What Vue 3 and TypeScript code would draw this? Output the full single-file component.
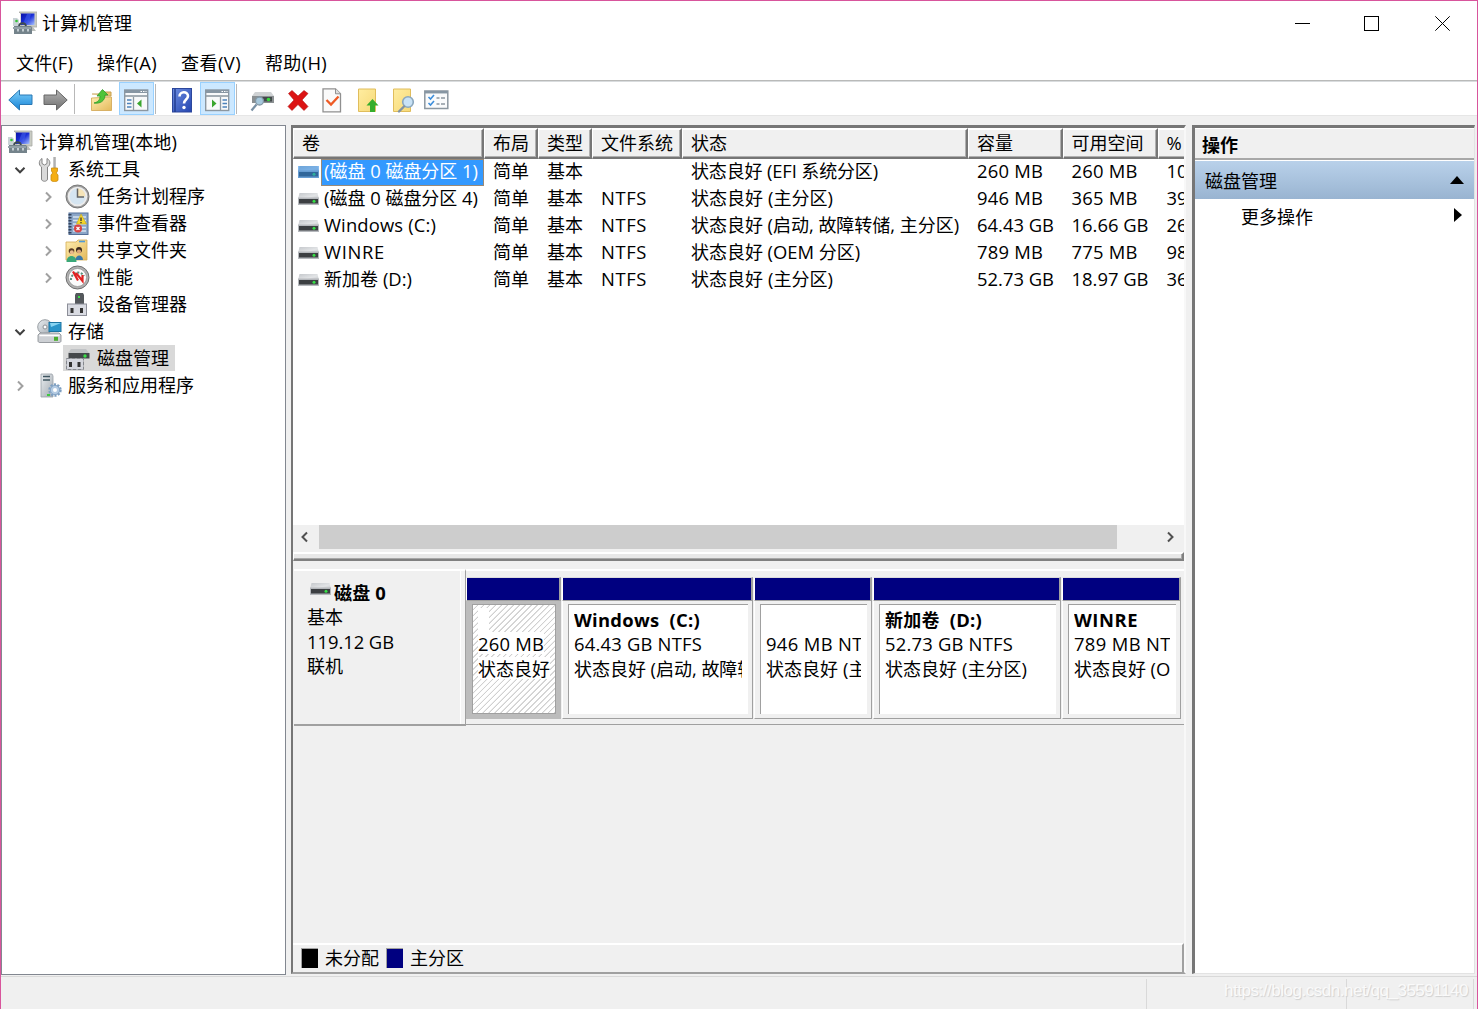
<script setup lang="ts">
import { h, type FunctionalComponent } from 'vue'

/* Splits a label into Latin and CJK runs so each script gets its own size. */
const Txt: FunctionalComponent<{ t: string }> = (props) =>
  h(
    'span',
    { class: 'txt' },
    (props.t.match(/[\u2e80-\u9fff]+|[^\u2e80-\u9fff]+/g) ?? []).map((run) =>
      h('span', { class: /[\u2e80-\u9fff]/.test(run) ? 'cjk' : 'lat' }, run),
    ),
  )
Txt.props = ['t']

/* Tunes letter spacing so that a label takes the given advance width. */
const vFit = {
  mounted(el: HTMLElement, binding: { value?: number }) {
    const target = binding.value
    const n = (el.textContent ?? '').length
    if (!target || !n) return
    const natural = el.getBoundingClientRect().width
    el.style.letterSpacing = `${(target - natural) / n}px`
  },
}

const menus = [
  { t: '文件(F)', w: 57 },
  { t: '操作(A)', w: 60 },
  { t: '查看(V)', w: 60 },
  { t: '帮助(H)', w: 62 },
]

interface Tool { icon: string; gap: number; on?: boolean }
const tools: Tool[] = [
  { icon: 'back', gap: 7 },
  { icon: 'fwd', gap: 11 },
  { icon: 'sep', gap: 7 },
  { icon: 'folder', gap: 15 },
  { icon: 'paneL', gap: 5, on: true },
  { icon: 'sep', gap: 1 },
  { icon: 'help', gap: 14 },
  { icon: 'paneR', gap: 6, on: true },
  { icon: 'sep', gap: 1 },
  { icon: 'scan', gap: 13 },
  { icon: 'del', gap: 12 },
  { icon: 'check', gap: 10 },
  { icon: 'up', gap: 12 },
  { icon: 'find', gap: 11 },
  { icon: 'list', gap: 9 },
]

interface Node { t: string; icon: string; lvl: number; arrow?: 'open' | 'closed'; sel?: boolean; w?: number }
const tree: Node[] = [
  { t: '计算机管理(本地)', icon: 'computer', lvl: 0, w: 138 },
  { t: '系统工具', icon: 'tools', lvl: 1, arrow: 'open' },
  { t: '任务计划程序', icon: 'clock', lvl: 2, arrow: 'closed' },
  { t: '事件查看器', icon: 'event', lvl: 2, arrow: 'closed' },
  { t: '共享文件夹', icon: 'share', lvl: 2, arrow: 'closed' },
  { t: '性能', icon: 'perf', lvl: 2, arrow: 'closed' },
  { t: '设备管理器', icon: 'device', lvl: 2 },
  { t: '存储', icon: 'storage', lvl: 1, arrow: 'open' },
  { t: '磁盘管理', icon: 'diskmgmt', lvl: 2, sel: true },
  { t: '服务和应用程序', icon: 'services', lvl: 1, arrow: 'closed' },
]

const columns = ['卷', '布局', '类型', '文件系统', '状态', '容量', '可用空间', '%']

interface Volume { name: string; nw: number; fs: string; st: string; sw: number; cap: string; cw: number; free: string; fw: number; pct: string; sel?: boolean }
const volumes: Volume[] = [
  { name: '(磁盘 0 磁盘分区 1)', nw: 154, fs: '', st: '状态良好 (EFI 系统分区)', sw: 187, cap: '260 MB', cw: 66, free: '260 MB', fw: 66, pct: '100 %', sel: true },
  { name: '(磁盘 0 磁盘分区 4)', nw: 154, fs: 'NTFS', st: '状态良好 (主分区)', sw: 142, cap: '946 MB', cw: 66, free: '365 MB', fw: 66, pct: '39 %' },
  { name: 'Windows (C:)', nw: 112, fs: 'NTFS', st: '状态良好 (启动, 故障转储, 主分区)', sw: 268, cap: '64.43 GB', cw: 77, free: '16.66 GB', fw: 77, pct: '26 %' },
  { name: 'WINRE', nw: 61, fs: 'NTFS', st: '状态良好 (OEM 分区)', sw: 169, cap: '789 MB', cw: 66, free: '775 MB', fw: 66, pct: '98 %' },
  { name: '新加卷 (D:)', nw: 88, fs: 'NTFS', st: '状态良好 (主分区)', sw: 142, cap: '52.73 GB', cw: 77, free: '18.97 GB', fw: 77, pct: '36 %' },
]

interface Part { width: number; name: string; nw?: number; size: string; sw: number; st: string; tw: number; sel?: boolean }
const parts: Part[] = [
  { width: 95, name: '', size: '260 MB', sw: 66, st: '状态良好', tw: 72, sel: true },
  { width: 191, name: 'Windows  (C:)', nw: 126, size: '64.43 GB NTFS', sw: 128, st: '状态良好 (启动, 故障转储, 主分区)', tw: 268 },
  { width: 118, name: '', size: '946 MB NTFS', sw: 117, st: '状态良好 (主分区)', tw: 142 },
  { width: 188, name: '新加卷  (D:)', nw: 97, size: '52.73 GB NTFS', sw: 128, st: '状态良好 (主分区)', tw: 142 },
  { width: 119, name: 'WINRE', nw: 64, size: '789 MB NTFS', sw: 117, st: '状态良好 (OEM 分区)', tw: 169 },
]
</script>

<template>
  <div class="window">
    <svg class="defs" width="0" height="0">
      <defs>
        <linearGradient id="gBlue" x1="0" y1="0" x2="0" y2="1"><stop offset="0" stop-color="#7fd0fa" /><stop offset="1" stop-color="#1683d6" /></linearGradient>
        <linearGradient id="gGrey" x1="0" y1="0" x2="0" y2="1"><stop offset="0" stop-color="#b4b4b4" /><stop offset="1" stop-color="#6e6e6e" /></linearGradient>
        <linearGradient id="gFold" x1="0" y1="0" x2="1" y2="1"><stop offset="0" stop-color="#ffeeb0" /><stop offset="1" stop-color="#e3b95c" /></linearGradient>
        <linearGradient id="gYel" x1="0" y1="0" x2="1" y2="1"><stop offset="0" stop-color="#ffedA0" /><stop offset="1" stop-color="#f6d978" /></linearGradient>
        <linearGradient id="gHelp" x1="0" y1="0" x2="1" y2="1"><stop offset="0" stop-color="#6d8de0" /><stop offset="1" stop-color="#2345b0" /></linearGradient>
        <linearGradient id="gScr" x1="0" y1="0" x2="1" y2="1"><stop offset="0" stop-color="#0a12a8" /><stop offset=".5" stop-color="#1b2fd8" /><stop offset="1" stop-color="#a9c4ff" /></linearGradient>
        <linearGradient id="gMetal" x1="0" y1="0" x2="1" y2="1"><stop offset="0" stop-color="#e8ecef" /><stop offset="1" stop-color="#a4abb2" /></linearGradient>
        <linearGradient id="gTop" x1="0" y1="0" x2="1" y2="1"><stop offset="0" stop-color="#c4c7cb" /><stop offset=".6" stop-color="#e2e4e6" /><stop offset="1" stop-color="#c4c7cb" /></linearGradient>
        <g id="computer">
          <path d="M6 1h18v15H8V3z" fill="#c9ccc4" stroke="#a8aaa4" stroke-width=".8" />
          <rect x="8" y="2.500" width="13.500" height="11.500" fill="url(#gScr)" />
          <path d="M14 3l4 0l-2 8l-6 2z" fill="#4c6cf0" opacity=".45" />
          <path d="M13 16h7l3 4H12z" fill="#b9bdb9" />
          <path d="M0 7h4l2 2v6H0z" fill="#c8d2d6" /><circle cx="3.500" cy="10" r="1.300" fill="#35c435" />
          <path d="M6 16c0-5 7-5 7 0" fill="none" stroke="#3e4a50" stroke-width="1.800" />
          <path d="M1 15h17l1 1.500v6.500H1z" fill="#74838b" /><path d="M0 16h18v2H0z" fill="#93a1a8" />
          <path d="M4 18h2v2.500H4zM9 18h2v2.500H9zM14 18h2v2.500h-2z" fill="#c3cdd2" />
        </g>
        <g id="drive">
          <path d="M1.500 0h18L21 6H0z" fill="url(#gTop)" /><rect x="0" y="4.500" width="21" height="7.500" fill="#b5b8bc" />
          <rect x="1" y="6" width="19" height="4.500" fill="#3c3f42" /><circle cx="16" cy="8.300" r="1.500" fill="#36e046" />
        </g>
        <g id="pane">
          <rect x=".7" y="1" width="23" height="20.500" fill="#f8f9fa" stroke="#8c97a0" stroke-width="1.400" />
          <rect x="1" y="1" width="22.500" height="3" fill="#8796a3" /><path d="M1 7h22" stroke="#8f9aa3" stroke-width="1.600" />
          <path d="M16.500 2.500h1.500M19 2.500h1.500M21.500 2.500h1" stroke="#fff" stroke-width="1.200" />
        </g>
        <g id="lens"><circle cx="15" cy="12" r="5.300" fill="#c8e2f6" stroke="#8aa7bd" stroke-width="1.600" /><path d="M11 16.500L6 21.500" stroke="#8293a2" stroke-width="2.400" stroke-linecap="round" /></g>
      </defs>
    </svg>

    <header class="title">
      <svg class="app-icon" viewBox="0 0 24 24"><use href="#computer" /></svg>
      <span class="caption">计算机管理</span>
      <div class="controls">
        <svg viewBox="0 0 15 15"><path d="M0 7.500h15" /></svg>
        <svg viewBox="0 0 15 15"><rect x=".5" y=".5" width="14" height="14" /></svg>
        <svg viewBox="0 0 15 15"><path d="M.3.3l14.400 14.400M14.700.3L.3 14.700" /></svg>
      </div>
    </header>

    <nav class="menu">
      <Txt v-for="m in menus" :key="m.t" v-fit="m.w" :t="m.t" />
    </nav>

    <div class="toolbar">
      <div v-for="(tool, i) in tools" :key="i" :class="['tool', { on: tool.on, sep: tool.icon === 'sep' }]" :style="{ marginLeft: tool.gap + 'px' }">
        <svg v-if="tool.icon !== 'sep'" viewBox="0 0 25 25">
          <path v-if="tool.icon === 'back'" d="M.8 12L11.500 2v5H24v9.500H11.500V22z" fill="url(#gBlue)" stroke="#2a78b4" />
          <path v-else-if="tool.icon === 'fwd'" d="M24.200 12L13.500 2v5H1v9.500h12.500V22z" fill="url(#gGrey)" stroke="#666" />
          <g v-else-if="tool.icon === 'folder'">
            <path d="M2 6h8l2 2h9V4h-7l-2 3" fill="#e9c672" stroke="#c7a050" /><path d="M1.500 10l20-1v13.500h-20z" fill="url(#gFold)" stroke="#d0a550" stroke-width=".8" />
            <path d="M4 15c4-1 6-3 6-7H7l5.500-6.500L18 7h-3c0 6-5 9-11 8z" fill="#50c43a" stroke="#2f9c28" stroke-width=".8" />
          </g>
          <g v-else-if="tool.icon === 'paneL'"><use href="#pane" /><path d="M9.500 8v13" stroke="#8f9aa3" stroke-width="1.300" /><path d="M3 11h4.500M3 14.500h4.500M3 18h4.500" stroke="#4c83bb" stroke-width="1.500" /><path d="M17.500 10.500v8l-4.500-4z" fill="#3aa62e" /></g>
          <g v-else-if="tool.icon === 'paneR'"><use href="#pane" /><path d="M15.500 8v13" stroke="#8f9aa3" stroke-width="1.300" /><path d="M17.500 11h4.500M17.500 14.500h4.500M17.500 18h4.500" stroke="#4c83bb" stroke-width="1.500" /><path d="M7 10.500v8l4.500-4z" fill="#3aa62e" /></g>
          <g v-else-if="tool.icon === 'help'">
            <rect x="2.500" y=".5" width="19" height="23.500" fill="url(#gHelp)" stroke="#2c479c" /><path d="M5 1v23" stroke="#1d3788" stroke-width="1.300" />
            <path d="M9.500 8.500c0-5.500 8.500-5.500 8.500-.5c0 3.500-4 3.500-4 7.500" fill="none" stroke="#fff" stroke-width="2.600" /><circle cx="14" cy="19.500" r="1.700" fill="#fff" />
          </g>
          <g v-else-if="tool.icon === 'scan'"><path d="M5 4h16l3 4H2z" fill="#cfd2d4" /><rect x="2" y="8" width="22" height="7" fill="#8b9092" /><rect x="10" y="9" width="12" height="4.500" fill="#43484b" /><circle cx="18.500" cy="11.500" r="1.800" fill="#38d83e" /><circle cx="9.500" cy="13" r="4" fill="#a6c8dc" stroke="#8296a4" stroke-width="1.300" /><path d="M6.500 16.500l-5 6" stroke="#7890a4" stroke-width="2.200" /></g>
          <path v-else-if="tool.icon === 'del'" d="M2.500 5.500L6 2.500l6 5.500l6-5.500l4 3l-6 6.500l6 6.500l-4 4l-6-6l-6 6l-4-4l6-6.500z" fill="#dc1414" stroke="#b00d0d" stroke-width=".6" />
          <g v-else-if="tool.icon === 'check'"><path d="M3 .8h12.500l5 5V23.800H3z" fill="#fafafa" stroke="#909090" stroke-width="1.300" /><path d="M15.500.8v5h5" fill="#ddd" stroke="#909090" /><path d="M6.500 12l4.500 4.500l7.500-8" fill="none" stroke="#ee5a24" stroke-width="2.300" /></g>
          <g v-else-if="tool.icon === 'up'"><path d="M2.500 1h17v22.500h-17z" fill="url(#gYel)" stroke="#e0bd5c" /><path d="M16.500 11l6 6.500h-3.500V24h-5v-6.500H10.500z" fill="#35ad2c" /></g>
          <g v-else-if="tool.icon === 'find'"><path d="M2.500 1h17v22.500h-17z" fill="url(#gYel)" stroke="#e0bd5c" /><g transform="translate(2 2)"><use href="#lens" /></g></g>
          <g v-else><rect x=".8" y="3" width="23" height="17.500" fill="#fafbfc" stroke="#8c97a0" stroke-width="1.500" /><path d="M1 4.200h22.500" stroke="#8796a3" stroke-width="2.500" /><path d="M4.500 9l2 2l3.500-4M4.500 15l2 2l3.500-4" fill="none" stroke="#3d8edb" stroke-width="1.600" /><path d="M12.500 10h3M17 10h4M12.500 16h3M17 16h4" stroke="#8d98a0" stroke-width="1.400" /></g>
        </svg>
      </div>
    </div>

    <main class="body">
      <aside class="tree">
        <div v-for="n in tree" :key="n.t" :class="['node', 'lvl' + n.lvl]">
          <svg v-if="n.lvl" class="arrow" viewBox="0 0 12 12">
            <path v-if="n.arrow === 'open'" d="M1.500 3.800l4.500 4.500l4.500-4.500" stroke="#404040" />
            <path v-else-if="n.arrow" d="M4 1.500l4.500 4.500l-4.500 4.500" stroke="#a0a0a0" />
          </svg>
          <div :class="['node-label', { sel: n.sel }]">
            <svg class="node-icon" viewBox="0 0 25 25">
              <use v-if="n.icon === 'computer'" href="#computer" />
              <g v-else-if="n.icon === 'tools'" transform="translate(1 0)">
                <path d="M4 1.500v5l2.500 1.500L9 6.500v-5c4 2 3.500 7 .5 8.500V22c0 3-6 3-6 0V10C.5 8 .5 3.500 4 1.500z" fill="#dadada" stroke="#858585" />
                <path d="M15.300 0h2.500v11h-2.500z" fill="#b0b0b0" /><path d="M13.500 11h6v3l-1.200 2l1.700 2v5c0 2-7 2-7 0v-5l1.700-2l-1.200-2z" fill="#f5ae12" stroke="#c88b10" stroke-width=".8" />
              </g>
              <g v-else-if="n.icon === 'clock'"><circle cx="12.500" cy="12.500" r="11.500" fill="#a0a0a0" stroke="#787878" /><circle cx="12.500" cy="12.500" r="9.800" fill="#ececec" /><circle cx="12.500" cy="12.500" r="8" fill="#d5e5f1" /><path d="M12.500 12.500v-8a8 8 0 0 1 8 8z" fill="#f5e4b8" /><path d="M12.500 4.500v8.500H19" fill="none" stroke="#666" stroke-width="1.500" /></g>
              <g v-else-if="n.icon === 'event'">
                <rect x="4" y="2" width="19" height="21.500" fill="#8ba6c8" stroke="#557099" /><path d="M8 6h13M8 9.500h13M8 13h13M8 16.500h13M8 20h13" stroke="#d5e2f0" stroke-width="1.300" />
                <path d="M5 3v20" stroke="#33425a" stroke-width="3" stroke-dasharray="1.500 1.500" /><path d="M16 3l5.500 10h-10z" fill="#f6d52a" stroke="#c7a716" stroke-width=".6" /><path d="M16 6.500v3.500M16 11v1.200" stroke="#333" stroke-width="1.300" />
                <circle cx="13" cy="17.500" r="4" fill="#d84444" /><path d="M11.500 16l3 3M14.500 16l-3 3" stroke="#fff" stroke-width="1.200" />
              </g>
              <g v-else-if="n.icon === 'share'">
                <path d="M1 4h10l2-2h9v20H1z" fill="url(#gFold)" stroke="#d4ac54" stroke-width=".8" /><path d="M14 3.500h6" stroke="#4e9bd8" stroke-width="1.600" />
                <circle cx="6.500" cy="13" r="2.800" fill="#5a3c24" /><circle cx="6.800" cy="14.300" r="2" fill="#e9b98d" /><path d="M1.500 24c0-8 10-8 10 0z" fill="#3aa878" />
                <circle cx="14" cy="12" r="3" fill="#3a2a1e" /><circle cx="14" cy="13.500" r="2.100" fill="#dba57a" /><path d="M10.500 22c0-6 7.500-6 7.500 0z" fill="#3a78a8" />
              </g>
              <g v-else-if="n.icon === 'perf'"><circle cx="12.500" cy="12.500" r="11.500" fill="#b0b0b0" stroke="#707070" /><circle cx="12.500" cy="12.500" r="9" fill="#fbfbfb" stroke="#8a8a8a" stroke-width=".6" /><path d="M6 15a7 7 0 0 1 13-4" fill="none" stroke="#58907c" stroke-width="2" stroke-dasharray="2 1.500" /><path d="M8 6.500l5 9M11 8l6.500 8v-6" fill="none" stroke="#e02222" stroke-width="2.200" /></g>
              <g v-else-if="n.icon === 'device'"><path d="M11 1h7l1 2v10h-9V3z" fill="#54585c" /><rect x="13" y="4" width="2" height="2" fill="#3be048" /><rect x="2.500" y="12" width="19" height="11.500" fill="#d9dbe2" stroke="#8c8e98" /><rect x="5.500" y="16" width="3" height="5" fill="#333" /><rect x="15" y="16" width="3" height="5" fill="#333" /></g>
              <g v-else-if="n.icon === 'storage'">
                <circle cx="8" cy="8" r="7.300" fill="url(#gMetal)" stroke="#9a9fa4" /><circle cx="8" cy="8" r="2" fill="#fff" stroke="#8d9297" /><rect x="12" y="3.500" width="12" height="9" fill="#2b95c9" stroke="#1c75a2" /><path d="M13 4h11l-10 4z" fill="#88d4f2" />
                <path d="M3 14h19l2 2v6c0 1-1 1.500-2 1.500H3c-1 0-2-.5-2-1.500v-6z" fill="#cdd0d4" stroke="#83888d" stroke-width=".8" /><path d="M2.500 16.500h20" stroke="#fff" stroke-width="1.500" /><rect x="17" y="17.800" width="4" height="4" fill="#4cae30" />
              </g>
              <g v-else-if="n.icon === 'diskmgmt'"><path d="M6 3h15l3 4H3z" fill="#c0c2c5" /><rect x="3.500" y="7" width="21" height="5.500" fill="#44484b" /><circle cx="20" cy="10" r="1.700" fill="#3be048" /><rect x="1.500" y="12.500" width="17" height="11" fill="#d5d7de" stroke="#85888e" stroke-dasharray="4 1" /><rect x="4" y="16" width="3" height="5" fill="#333" /><rect x="12.500" y="16" width="3" height="5" fill="#333" /></g>
              <g v-else><path d="M4 1h11l1 2v21H4z" fill="url(#gMetal)" stroke="#9aa1a8" stroke-width=".8" /><path d="M6 3.500h7M6 7h7" stroke="#3f5560" stroke-width="1.500" /><rect x="10" y="21" width="3" height="2" fill="#40c840" /><circle cx="18" cy="17" r="5.300" fill="#b8cfe6" stroke="#7d9ec0" stroke-width="2.800" stroke-dasharray="2 1.330" /><circle cx="18" cy="17" r="4.600" fill="#b3cae2" stroke="#86a5c6" /><circle cx="18" cy="17" r="2" fill="#fff" /></g>
            </svg>
            <Txt v-fit="n.w" :t="n.t" />
          </div>
        </div>
      </aside>

      <section class="center">
        <div class="grid-view">
          <div class="cols head"><div v-for="c in columns" :key="c" class="cell"><Txt :t="c" /></div></div>
          <div v-for="v in volumes" :key="v.name" :class="['cols', 'row', { sel: v.sel }]">
            <div class="cell name">
              <svg class="drive" viewBox="0 0 21 12"><use href="#drive" /><rect v-if="v.sel" width="21" height="12" fill="#2686e4" opacity=".55" /></svg>
              <div class="tag"><Txt v-fit="v.nw" :t="v.name" /></div>
            </div>
            <div class="cell"><Txt t="简单" /></div>
            <div class="cell"><Txt t="基本" /></div>
            <div class="cell"><Txt v-fit="46" :t="v.fs" /></div>
            <div class="cell"><Txt v-fit="v.sw" :t="v.st" /></div>
            <div class="cell"><Txt v-fit="v.cw" :t="v.cap" /></div>
            <div class="cell"><Txt v-fit="v.fw" :t="v.free" /></div>
            <div class="cell"><Txt :t="v.pct" /></div>
          </div>
        </div>
        <div class="scroll">
          <svg viewBox="0 0 12 12"><path d="M8 1.500L3.500 6L8 10.500" /></svg>
          <div class="thumb"></div>
          <svg class="right" viewBox="0 0 12 12"><path d="M4 1.500L8.500 6L4 10.500" /></svg>
        </div>
        <div class="splitter"></div>

        <div class="disk">
          <div class="disk-info">
            <div class="disk-name"><svg class="drive" viewBox="0 0 21 12"><use href="#drive" /></svg><Txt v-fit="52" t="磁盘 0" /></div>
            <div><Txt t="基本" /></div>
            <div><Txt v-fit="87" t="119.12 GB" /></div>
            <div><Txt t="联机" /></div>
          </div>
          <div class="parts">
            <div v-for="(p, i) in parts" :key="i" :class="['part', { sel: p.sel }]" :style="{ width: p.width + 'px' }">
              <div class="bar"></div>
              <div class="frame">
                <div class="inner">
                  <div class="line bold"><Txt v-if="p.name" v-fit="p.nw" :t="p.name" /><i v-else-if="p.sel" class="blank"></i></div>
                  <div class="line"><Txt v-fit="p.sw" :t="p.size" /></div>
                  <div class="line"><Txt v-fit="p.tw" :t="p.st" /></div>
                </div>
              </div>
            </div>
          </div>
        </div>
        <div class="empty"></div>
        <div class="legend"><i class="sw black"></i><span>未分配</span><i class="sw navy"></i><span>主分区</span></div>
      </section>

      <aside class="actions">
        <div class="act-head">操作</div>
        <div class="act-group"><span>磁盘管理</span><svg viewBox="0 0 14 8"><path d="M0 8L7 0l7 8z" /></svg></div>
        <div class="act-item"><span>更多操作</span><svg viewBox="0 0 8 14"><path d="M0 0l8 7l-8 7z" /></svg></div>
      </aside>
    </main>

    <footer class="status"><div></div><div></div><div></div></footer>
    <div class="watermark"><span v-fit="244">https://blog.csdn.net/qq_35591140</span></div>
  </div>
</template>

<style>
body { margin: 0; background: #f0f0f0; }
.txt { display: inline-block; white-space: pre; }
.txt .lat { font-family: "Open Sans", "Noto Sans", sans-serif; font-size: 18.4px; line-height: 1; }
.txt .cjk { line-height: 1; }
</style>

<style scoped>
.window { position: relative; box-sizing: border-box; width: 1478px; height: 1009px; overflow: hidden; display: flex; flex-direction: column; background: #f0f0f0; border: 1px solid #d8559c; border-bottom: 0; font-family: "Noto Sans CJK SC", sans-serif; font-size: 18px; line-height: 24px; color: #000; }
.defs { position: absolute; }
.title { height: 45px; background: #fff; display: flex; align-items: center; padding-left: 12px; flex: none; }
.app-icon { width: 24px; height: 24px; margin-bottom: 1px; }
.caption { margin: 0 0 3px 5px; }
.controls { margin-left: auto; display: flex; gap: 55px; padding-right: 27px; }
.controls svg { width: 15px; height: 15px; fill: none; stroke: #000; stroke-width: 1; }
.controls svg:first-child { margin-right: -1px; }
.controls svg:last-child { margin-left: 1px; }
.menu { height: 34px; background: #fff; display: flex; align-items: center; gap: 24px; padding-left: 15px; border-bottom: 1px solid #b9bab9; flex: none; }
.menu .txt { margin-bottom: 2px; }
.toolbar { height: 33px; background: #fff; display: flex; align-items: center; border-top: 1px solid #d9dcde; border-bottom: 1px solid #e6e6e6; flex: none; }
.tool { width: 24px; height: 32px; display: flex; align-items: center; justify-content: center; flex: none; }
.tool svg { width: 25px; height: 25px; margin-top: 4px; flex: none; }
.tool.on { box-sizing: border-box; width: 35px; height: 33px; background: #cce8ff; border: 1px solid #99d1ff; }
.tool.on svg { margin-top: 6px; }
.tool.sep { width: 1px; height: 30px; background: #b8b8b8; }

.body { display: flex; height: 860px; flex: none; }
.tree { box-sizing: border-box; width: 285px; height: 850px; margin-top: 9px; background: #fff; border: 1px solid #828790; padding-top: 3px; flex: none; }
.node { display: flex; height: 27px; align-items: center; }
.arrow { width: 12px; height: 12px; fill: none; stroke-width: 2; flex: none; }
.lvl0 { padding-left: 6px; }
.lvl1 { padding-left: 12px; }
.lvl2 { padding-left: 40px; }
.node-label { display: flex; align-items: center; height: 26px; gap: 6px; padding-right: 6px; margin-top: -2px; }
.lvl1 .node-label { margin-left: 11px; }
.lvl2 .node-label { margin-left: 9px; padding-left: 2px; gap: 7px; }
.node-label.sel { background: #d9d9d9; }
.node-label .txt { margin-bottom: 2px; }
.node-icon { width: 25px; height: 25px; margin-top: 1px; }

.center { box-sizing: border-box; width: 895px; height: 849px; margin: 9px 0 0 5px; border: 2px solid; border-width: 3px 2px 2px 2px; border-color: #767676 #f8f8f8 #a0a0a0 #767676; display: flex; flex-direction: column; flex: none; }
.grid-view { height: 397px; background: #fff; overflow: hidden; flex: none; }
.grid-view .txt { margin-bottom: 5px; }
.grid-view .head .txt { margin-bottom: 4px; }
.cols { display: grid; grid-template-columns: 191px 54px 54px 90px 286px 94.500px 95px 60px; width: 924.500px; }
.head { height: 31px; }
.head .cell { box-sizing: border-box; background: #f0f0f0; border: 1px solid #f4f4f4; border-width: 2px 2px 2px 1px; border-color: #fff #767676 #767676 #fff; box-shadow: inset -1px -1px #b0b0b0; height: 31px; padding-left: 8px; display: flex; align-items: center; padding-top: 1px; }
.row { height: 27px; }
.row .cell { padding-left: 9px; display: flex; align-items: center; height: 27px; overflow: hidden; white-space: nowrap; }
.row .name { padding-left: 5px; }
.drive { width: 21px; height: 12px; flex: none; }
.row .drive { margin-bottom: 1px; }
.tag { box-sizing: border-box; height: 27px; margin-left: 2px; padding-left: 2px; display: flex; align-items: center; width: 163px; border: 1px solid transparent; }
.sel .tag { background: #3399ff; color: #fff; border-color: #9a8a78; }
.scroll { height: 24px; background: #f0f0f0; display: flex; align-items: center; flex: none; padding-left: 6px; }
.scroll svg { width: 12px; height: 12px; fill: none; stroke: #505050; stroke-width: 2; }
.thumb { width: 798px; height: 24px; background: #cdcdcd; margin-left: 8px; }
.scroll .right { margin-left: 47px; }
.splitter { box-sizing: border-box; height: 9px; margin-top: 3px; border: 1px solid #fff; border-width: 2px 2px 2px 1px; border-color: #fff #808080 #808080 #fff; box-shadow: inset -1px -1px #a8a8a8; background: #e8e8e8; flex: none; }

.disk { display: flex; height: 157px; margin-top: 8px; flex: none; }
.disk-info { box-sizing: border-box; width: 172px; height: 157px; border-right: 1px solid #a0a0a0; border-bottom: 2px solid #a0a0a0; border-top: 2px solid #fff; box-shadow: inset -4px 0 #f4f4f4, inset -5px 0 #fff; padding: 9px 0 0 13px; line-height: 24.300px; margin-left: 1px; }
.disk-info > div { height: 24.300px; }
.disk-name { display: flex; align-items: center; font-weight: 700; }
.disk-name .drive { margin: -7px 3px 0 3px; }
.parts { display: flex; gap: 1px; box-sizing: border-box; height: 156px; width: 718px; border-top: 2px solid #fff; border-bottom: 1px solid #a0a0a0; padding-top: 6px; }
.part { display: flex; flex-direction: column; height: 142px; flex: none; }
.bar { box-sizing: border-box; height: 24px; background: #000080; border: 1px solid #a0a0a0; border-width: 1px 2px 1px 1px; border-color: #ddd #a0a0a0 #a0a0a0 #fff; flex: none; }
.frame { box-sizing: border-box; flex: 1; min-height: 0; padding: 3px 4px 4px 5px; border: 1px solid #a0a0a0; border-left-color: #fff; border-top-width: 0; }
.inner { box-sizing: border-box; height: 100%; background: #fff; border-top: 1px solid #a0a0a0; border-left: 1px solid #a0a0a0; padding: 2px 6px 0 5px; overflow: hidden; }
.line { height: 24.300px; line-height: 24.300px; overflow: hidden; white-space: nowrap; }
.bold { font-weight: 700; }
.part.sel .frame { background: #bcbcbc; border-color: #bcbcbc; }
.part.sel .inner { border: 1px solid #a0a0a0; padding: 3px 0 0 5px; background: repeating-linear-gradient(135deg, #fff 0 2.700px, #d0d0d0 3.300px 3.900px, #fff 4.200px); }
.part.sel .txt { background: #fff; line-height: 22px; vertical-align: top; }
.blank { display: block; width: 11px; height: 24px; background: #fff; }
.empty { flex: 1; }
.legend { height: 29px; box-sizing: border-box; display: flex; align-items: center; border-top: 2px solid #fff; border-right: 2px solid #a0a0a0; padding: 0 0 2px 8px; flex: none; }
.sw { width: 16px; height: 19px; border-top: 1px solid #a0a0a0; border-left: 1px solid #a0a0a0; }
.sw.black { background: #000; }
.sw.navy { background: #000080; margin-left: 7px; }
.legend span { margin: 0 0 1px 7px; }

.actions { box-sizing: border-box; width: 283px; height: 849px; margin: 9px 0 0 6px; border: 3px solid #767676; border-width: 3px 1px 1px 3px; border-color: #767676 #e3e3e3 #e3e3e3 #767676; background: #fff; flex: none; }
.act-head { box-sizing: border-box; height: 31px; margin-top: 1px; background: #f0f0f0; border-bottom: 2px solid #a8a8a8; padding-left: 7px; line-height: 30px; font-weight: 700; }
.act-group { height: 38px; margin-top: 1px; background: linear-gradient(#b9d1ea, #99b4d1); display: flex; align-items: center; padding: 0 10px; justify-content: space-between; }
.act-group svg { width: 14px; height: 8px; }
.act-item { height: 34px; display: flex; align-items: center; justify-content: space-between; padding: 0 12px 0 46px; }
.act-item svg { width: 8px; height: 14px; margin-top: -2px; }
.status { flex: 1; border-top: 1px solid #d9d9d9; display: flex; padding-top: 2px; }
.status div { box-sizing: border-box; border-right: 1px solid #d9d9d9; width: 1146px; }
.status div:nth-child(2) { width: 200px; }
.status div:nth-child(3) { width: 127px; }
.watermark { position: absolute; right: 9px; top: 979px; font: 17px/22px "Liberation Sans", sans-serif; color: #fafafa; text-shadow: 1px 1px 1px #cfcfcf; white-space: nowrap; }
</style>
